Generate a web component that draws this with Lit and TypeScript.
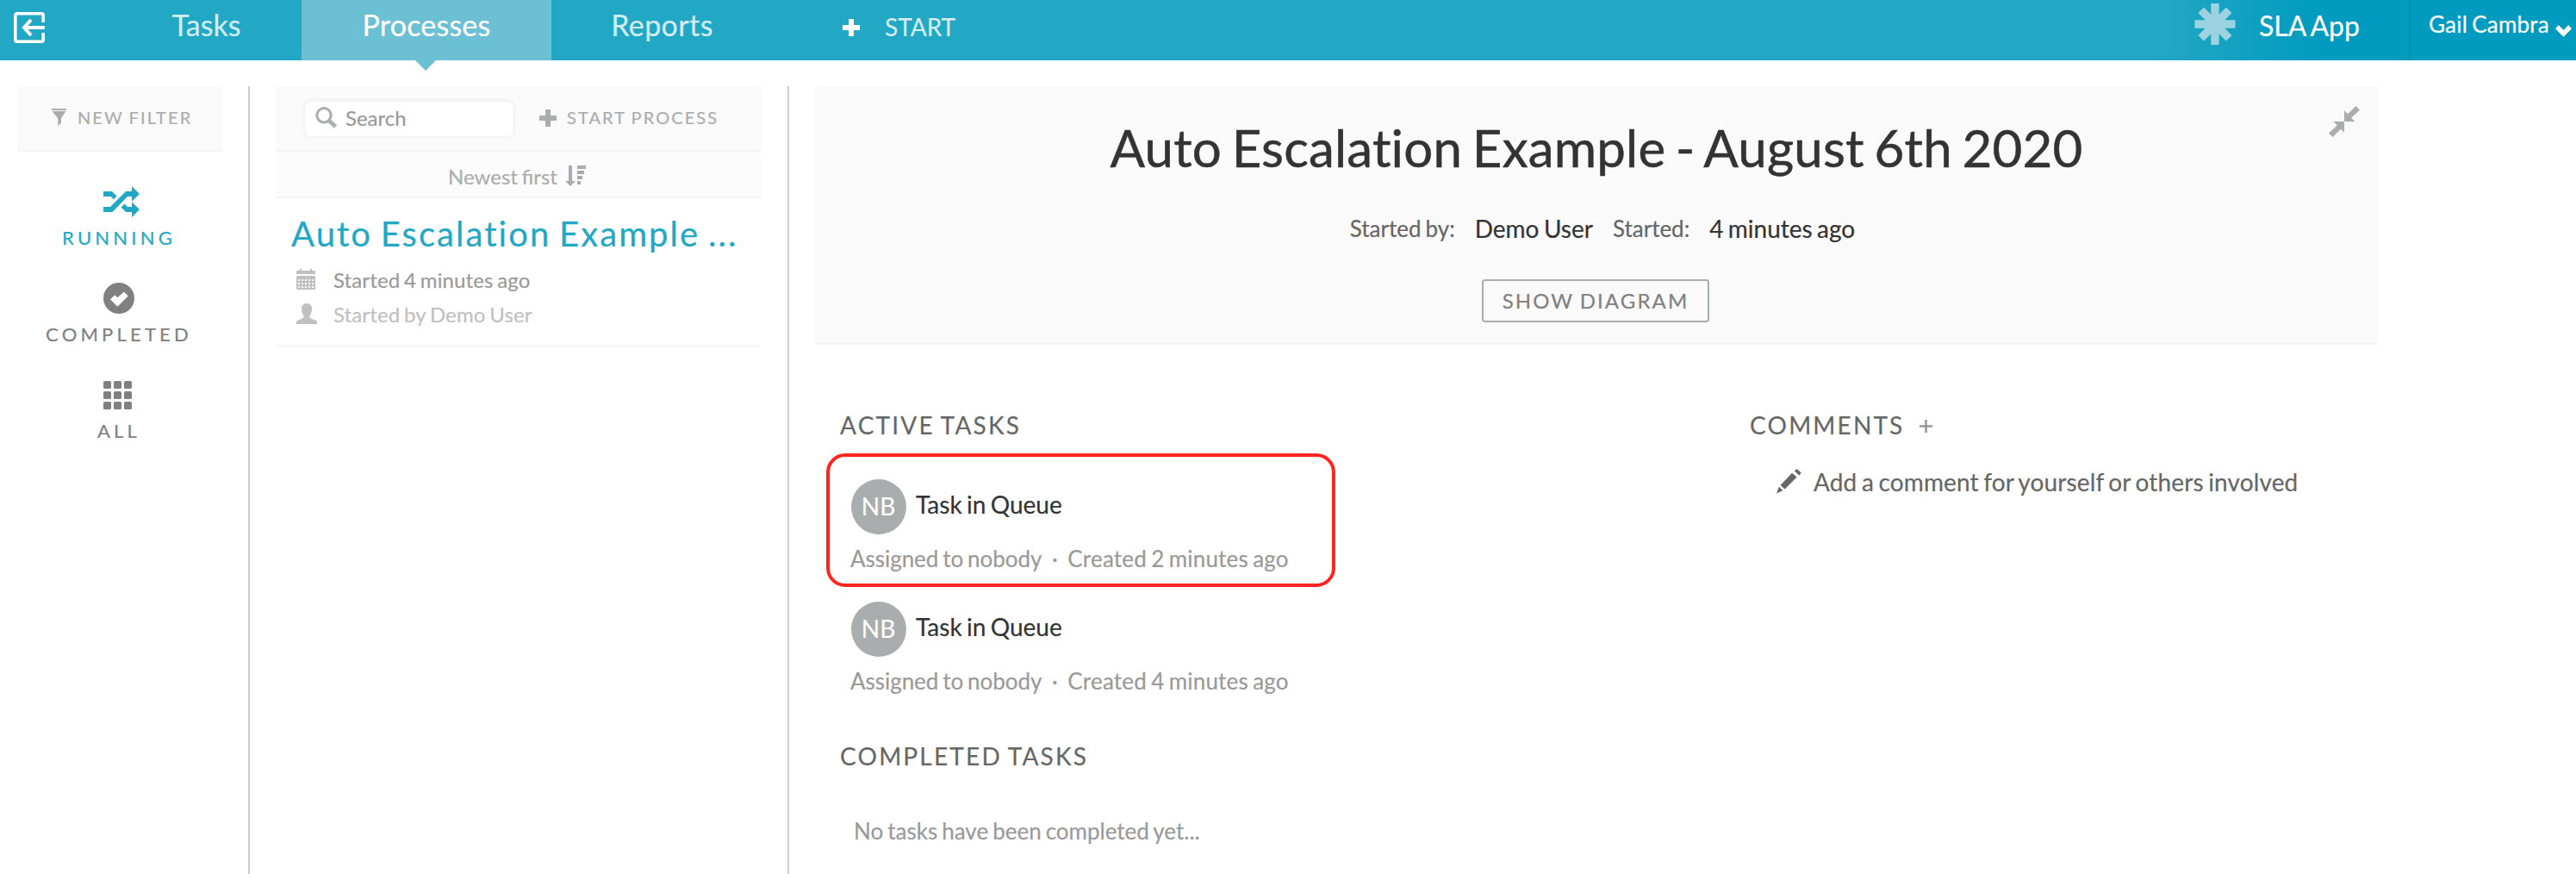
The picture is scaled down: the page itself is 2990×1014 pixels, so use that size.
import { LitElement, html, svg, css } from "lit";
import { customElement, property } from "lit/decorators.js";

const icons = {
  exit: svg`<svg class="icon" width="36" height="36" viewBox="0 0 36 36"><path d="M34.2 12V3.8a2 2 0 0 0-2-2H3.8a2 2 0 0 0-2 2v28.4a2 2 0 0 0 2 2h28.4a2 2 0 0 0 2-2V24" fill="none" stroke="currentColor" stroke-width="3.6"/><path d="M36 18H12M20 9l-8 9 8 9" fill="none" stroke="currentColor" stroke-width="4"/></svg>`,
  plus: svg`<svg class="icon" width="20" height="20" viewBox="0 0 20 20"><path d="M7 0h6v7h7v6h-7v7H7v-7H0V7h7z" fill="currentColor"/></svg>`,
  asterisk: svg`<svg class="icon" width="48" height="48" viewBox="-24 -24 48 48"><g fill="currentColor"><rect x="-4.7" y="-24" width="9.4" height="48"/><rect x="-23.5" y="-4.7" width="47" height="9.4"/><rect x="-4.7" y="-23" width="9.4" height="46" transform="rotate(45)"/><rect x="-4.7" y="-23" width="9.4" height="46" transform="rotate(-45)"/></g></svg>`,
  chevron: svg`<svg class="icon" width="19" height="14" viewBox="0 0 19 14"><path d="M0 4.2 3.8 0l5.7 6 5.7-6L19 4.2l-9.5 9.6z" fill="currentColor"/></svg>`,
  filter: svg`<svg class="icon" width="17" height="20" viewBox="0 0 17 20"><path d="M0 0h17v2H0zM.6 3h15.8L11 11.2v5.3L7.2 20v-8.8z" fill="currentColor"/></svg>`,
  search: svg`<svg class="icon" width="26" height="25" viewBox="0 0 26 25"><circle cx="10" cy="9.8" r="8.2" fill="none" stroke="currentColor" stroke-width="3"/><path d="m15.5 15.5 8 7.5" fill="none" stroke="currentColor" stroke-width="4.6"/></svg>`,
  sort: svg`<svg class="icon" width="24" height="24" viewBox="0 0 24 24"><path d="M4 0h4v18h4l-6 6-6-6h4zM14 0h10v4H14zM14 6h8v4h-8zM14 12h6v4h-6zM14 18h4v4h-4z" fill="currentColor"/></svg>`,
  shuffle: svg`<svg class="icon" width="42" height="36" viewBox="0 0 42 36"><path d="M0 6h10l5.5 5.5L12 15.2 8.6 12H0zM0 24h8L26 6h7V0l9 9-9 8.7V12h-5L10.4 30H0zM20.6 24.4l3.8-4L28 24h5v-5.7l9 8.7-9 9v-6h-7z" fill="currentColor"/></svg>`,
  check: svg`<svg class="icon" width="36" height="36" viewBox="0 0 36 36"><circle cx="18" cy="18" r="18" fill="currentColor"/><path d="m8 19.3 5.3-5 3 2.9 7.6-6.8 4.8 5-12.4 12.3z" fill="#fff"/></svg>`,
  grid: svg`<svg class="icon" width="33" height="33" viewBox="0 0 33 33"><g fill="currentColor">${[0, 12, 24].map(
    (y) => [0, 12, 24].map((x) => svg`<rect x=${x} y=${y} width="9" height="9" rx="1.6"/>`)
  )}</g></svg>`,
  calendar: svg`<svg class="icon" width="22" height="24" viewBox="0 0 22 24"><g fill="currentColor"><path d="M1 2h3V0h2v2h10V0h2v2h3a1 1 0 0 1 1 1v3H0V3a1 1 0 0 1 1-1z"/><rect y="8" width="22" height="16" rx="1"/></g><g fill="#fff">${[12, 16, 20].map(
    (y) => [2, 6, 10, 14, 18].map((x) => svg`<rect x=${x} y=${y} width="2" height="2"/>`)
  )}</g></svg>`,
  user: svg`<svg class="icon" width="24" height="24" viewBox="0 0 24 24"><path d="M12 0c4.2 0 6 2.6 6 6.6 0 3-.8 5.6-2.5 7.400v1.600c0 1 .6 1.500 2 2.100l4.500 1.900c1.500.7 2 1.100 2 2.400v2H0v-2c0-1.300.5-1.700 2-2.400l4.500-1.900c1.400-.6 2-1.100 2-2.100V14C6.800 12.200 6 9.600 6 6.600 6 2.600 7.800 0 12 0z" fill="currentColor"/></svg>`,
  collapse: svg`<svg class="icon" width="36" height="36" viewBox="0 0 36 36"><path d="M18 5v13h12.500L26.200 13.800 36 4.500 31.400 0 22 9.200zM18 31V18H5.500L9.800 22.200 0 31.500 4.600 36 14 26.800z" fill="currentColor"/></svg>`,
  pencil: svg`<svg class="icon" width="29" height="29" viewBox="0 0 29 29"><path d="m21 2.400 1.500-1.700q1-.9 2 0l3.500 3q.9 1 0 2L26.200 7.500zM18 4.700l5.600 4.700L9.600 23.500 4.600 19zM2.900 20.700l4.600 4.200L0 28.500z" fill="currentColor"/></svg>`,
  thinPlus: svg`<svg class="icon" width="15" height="15" viewBox="0 0 15 15"><path d="M6.200 0h2.600v6.200H15v2.600H8.800V15H6.200V8.800H0V6.200h6.200z" fill="currentColor"/></svg>`,
};

const filters = [
  { label: "RUNNING", icon: icons.shuffle, active: true },
  { label: "COMPLETED", icon: icons.check, active: false },
  { label: "ALL", icon: icons.grid, active: false },
];

const tasks = [
  { name: "Task in Queue", initials: "NB", assignee: "Assigned to nobody", created: "Created 2 minutes ago", marked: true },
  { name: "Task in Queue", initials: "NB", assignee: "Assigned to nobody", created: "Created 4 minutes ago", marked: false },
];

// Set on every element so the em value follows each text's own size.
const tightWords = css`* { word-spacing: -0.063em; }`;

@customElement("task-item")
class TaskItem extends LitElement {
  @property({ attribute: false }) task = tasks[0];

  static styles = [tightWords, css`
    :host { display: block; position: relative; height: 142px; }
    .row { display: flex; gap: 11px; }
    .avatar { width: 64px; height: 64px; border-radius: 50%; background: #a9adad; color: #fff; font-size: 28px; line-height: 63px; text-align: center; text-indent: -1px; }
    .name { font-size: 28px; line-height: 58px; color: #333; }
    .meta { display: flex; margin: 12px 0 0 -1px; font-size: 26px; line-height: 32px; color: #999; }
    .assignee { letter-spacing: -0.05px; }
    .dot { width: 30px; text-align: center; }
    .created { letter-spacing: 0.2px; }
    .mark { position: absolute; left: -29px; top: -30px; width: 591px; height: 155px; box-sizing: border-box; border: 4px solid #ff2620; border-radius: 22px; }
  `];

  render() {
    const t = this.task;
    return html`
      <div class="row">
        <div class="avatar">${t.initials}</div>
        <div class="name">${t.name}</div>
      </div>
      <div class="meta"><span class="assignee">${t.assignee}</span><span class="dot">·</span><span class="created">${t.created}</span></div>
      ${t.marked ? html`<div class="mark"></div>` : null}
    `;
  }
}

@customElement("app-root")
class AppRoot extends LitElement {
  static styles = [tightWords, css`
    :host { display: block; height: 1014px; overflow: hidden; background: #fff; font-family: Lato, "Liberation Sans", sans-serif; white-space: nowrap; -webkit-text-stroke: 0.18px currentcolor; }
    .icon { display: block; flex: none; }

    .header { display: flex; height: 70px; background: #22a7c4; color: #d3edf3; }
    .exit { width: 112px; padding: 14px 0 0 16px; color: #fff; }
    .tab { position: relative; font-size: 34px; line-height: 58px; text-align: center; }
    .tab.tasks { width: 223px; margin-right: -1px; }
    .tab.processes { width: 290px; background: #6cc0d4; color: #fff; letter-spacing: 0.2px; }
    .tab.processes::after { content: ""; position: absolute; left: 132px; top: 70px; border: 12px solid transparent; border-top-color: #6cc0d4; border-bottom: 0; }
    .tab.reports { width: 257px; letter-spacing: 0.4px; }
    .start { display: flex; gap: 29px; margin-left: 81px; font-size: 28px; line-height: 62px; }
    .start .icon { margin-top: 22px; color: #fff; }
    .brand { display: flex; box-sizing: border-box; width: 290px; margin-left: auto; padding-left: 41px; background: linear-gradient(90deg, #22a7c4 10px, #009bbf 185px); color: #fff; font-size: 32px; line-height: 59px; }
    .brand .icon { margin: 4px 27px 0 0; color: #9dd2e0; }
    .account { display: flex; box-sizing: border-box; width: 194px; padding-left: 21px; border-left: 2px solid #028fb0; background: #009bbf; color: #fff; font-size: 26px; line-height: 56px; letter-spacing: 0.2px; }
    .account .icon { margin: 29px 5px 0 auto; }

    .body { display: flex; height: 914px; margin-top: 30px; }
    .filters { width: 238px; padding: 0 30px 0 20px; border-right: 2px solid #ccc; }
    .new-filter { display: flex; height: 74px; padding-left: 40px; gap: 13px; background: #fafafa; border-bottom: 2px solid #f4f4f4; color: #a9adad; font-size: 20px; letter-spacing: 2.1px; line-height: 73px; }
    .new-filter .icon { margin-top: 26px; }
    .filter { display: flex; flex-direction: column; height: 112px; color: #808080; }
    .filter.active { color: #22a7c4; }
    .filter .pic { height: 36px; margin: 0 0 10px 100px; display: flex; align-items: center; }
    .filter .label { padding-right: 2px; font-size: 22px; line-height: 27px; letter-spacing: 4.2px; text-align: center; }
    .filter-list { padding-top: 40px; }

    .list { width: 564px; padding: 0 30px; border-right: 2px solid #ccc; }
    .tools { display: flex; height: 74px; background: #fafafa; border-bottom: 2px solid #f4f4f4; color: #a9adad; }
    .search { display: flex; box-sizing: border-box; width: 246px; height: 46px; margin: 14px 28px 0 32px; padding: 8px 0 0 12px; gap: 9px; border: 2px solid #f4f4f4; border-radius: 9px; background: #fff; box-shadow: inset 0 2px 2px #f0f0f0; font-size: 24px; line-height: 25px; color: #999; }
    .search .icon { color: #a9adad; }
    .start-process { display: flex; gap: 12px; font-size: 20px; letter-spacing: 2.1px; line-height: 73px; }
    .start-process .icon { margin-top: 27px; }
    .sort { display: flex; justify-content: center; height: 52px; padding-right: 4px; gap: 9px; background: #fcfcfc; border-bottom: 2px solid #f4f4f4; color: #a9adad; font-size: 24px; line-height: 57px; }
    .sort .icon { margin-top: 16px; }
    .process { width: 562px; height: 170px; border-bottom: 2px solid #f4f4f4; }
    .process-name { padding: 16px 0 0 18px; font-size: 40px; line-height: 50px; letter-spacing: 2.05px; color: #22a7c4; }
    .fact { display: flex; height: 40px; padding-left: 24px; font-size: 24px; line-height: 26px; letter-spacing: 0.12px; color: #999; }
    .fact .icon { color: #c0c0c0; }
    .fact .pic { width: 43px; }
    .fact.dim { color: #c0c0c0; }
    .facts { padding-top: 16px; }

    .detail { width: 1814px; padding-left: 30px; }
    .summary { position: relative; height: 298px; background: #fafafa; border-bottom: 2px solid #f4f4f4; }
    .summary .collapse { position: absolute; right: 21px; top: 23px; color: #a9adad; }
    .title { padding-top: 34px; font-size: 60px; line-height: 74px; letter-spacing: 0.18px; font-variant-ligatures: none; text-align: center; color: #333; -webkit-text-stroke-width: 0.5px; }
    .started { display: flex; justify-content: center; gap: 23px; padding: 38px 0 0 14px; font-size: 28px; line-height: 38px; color: #333; }
    .started .key { font-size: 26px; color: #666; }
    .diagram { box-sizing: border-box; width: 264px; height: 50px; margin: 40px auto 0 774px; border: 2px solid #a9adad; border-radius: 4px; font-size: 24px; line-height: 46px; letter-spacing: 2.1px; text-align: center; color: #808080; }
    .columns { display: flex; }
    .tasks-col { width: 1056px; padding: 76px 0 0 30px; }
    .comments-col { padding-top: 76px; }
    .heading { display: flex; margin-left: -1px; font-size: 28px; line-height: 34px; letter-spacing: 2.2px; color: #666; }
    .heading .icon { margin: 11px 0 0 17px; color: #999; }
    .task-list { padding: 46px 0 0 12px; }
    .completed { margin-top: 20px; }
    .none { padding: 54px 0 0 15px; font-size: 26px; line-height: 32px; color: #999; }
    .add { display: flex; gap: 14px; padding: 32px 0 0 30px; font-size: 28px; line-height: 34px; letter-spacing: 0.13px; color: #666; }
    .add .icon { margin-top: 2px; }
  `];

  render() {
    return html`
      <div class="header">
        <div class="exit">${icons.exit}</div>
        <div class="tab tasks">Tasks</div>
        <div class="tab processes">Processes</div>
        <div class="tab reports">Reports</div>
        <div class="start">${icons.plus}<span>START</span></div>
        <div class="brand">${icons.asterisk}<span>SLA App</span></div>
        <div class="account"><span>Gail Cambra</span>${icons.chevron}</div>
      </div>
      <div class="body">
        <div class="filters">
          <div class="new-filter">${icons.filter}<span>NEW FILTER</span></div>
          <div class="filter-list">
            ${filters.map(
              (f) => html`<div class="filter ${f.active ? "active" : ""}">
                <div class="pic">${f.icon}</div>
                <div class="label">${f.label}</div>
              </div>`
            )}
          </div>
        </div>
        <div class="list">
          <div class="tools">
            <div class="search">${icons.search}<span>Search</span></div>
            <div class="start-process">${icons.plus}<span>START PROCESS</span></div>
          </div>
          <div class="sort"><span>Newest first</span>${icons.sort}</div>
          <div class="process">
            <div class="process-name">Auto Escalation Example ...</div>
            <div class="facts">
              <div class="fact"><div class="pic">${icons.calendar}</div>Started 4 minutes ago</div>
              <div class="fact dim"><div class="pic">${icons.user}</div>Started by Demo User</div>
            </div>
          </div>
        </div>
        <div class="detail">
          <div class="summary">
            <div class="collapse">${icons.collapse}</div>
            <div class="title">Auto Escalation Example - August 6th 2020</div>
            <div class="started">
              <span class="key">Started by:</span><span>Demo User</span>
              <span class="key">Started:</span><span>4 minutes ago</span>
            </div>
            <div class="diagram">SHOW DIAGRAM</div>
          </div>
          <div class="columns">
            <div class="tasks-col">
              <div class="heading">ACTIVE TASKS</div>
              <div class="task-list">${tasks.map((t) => html`<task-item .task=${t}></task-item>`)}</div>
              <div class="heading completed">COMPLETED TASKS</div>
              <div class="none">No tasks have been completed yet...</div>
            </div>
            <div class="comments-col">
              <div class="heading">COMMENTS ${icons.thinPlus}</div>
              <div class="add">${icons.pencil}<span>Add a comment for yourself or others involved</span></div>
            </div>
          </div>
        </div>
      </div>
    `;
  }
}
